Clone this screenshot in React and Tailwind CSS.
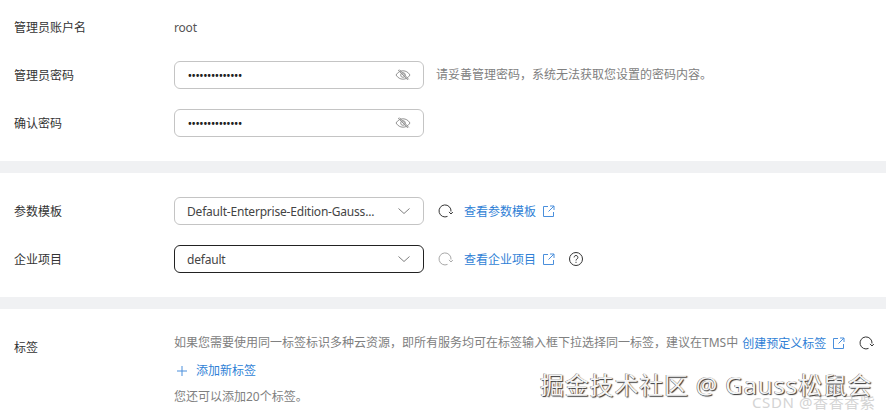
const sans = "font-['Noto_Sans','Noto_Sans_CJK_SC',sans-serif]";

function EyeOff() {
  return (
    <svg width="16" height="16" viewBox="0 0 16 16" fill="none" stroke="#949494" strokeWidth="1">
      <path d="M1 8c1.800-2.800 4.200-4.200 7-4.200s5.200 1.400 7 4.200c-1.800 2.800-4.200 4.200-7 4.200S2.800 10.800 1 8z" />
      <circle cx="8" cy="8" r="2.300" />
      <path d="M3.200 3l9.600 10M4.400 2.600l9.400 9.800" />
    </svg>
  );
}

function Chevron() {
  return (
    <svg width="14" height="14" viewBox="0 0 14 14" fill="none" stroke="#808080" strokeWidth="1">
      <path d="M1.500 4.500L7 9.500l5.500-5" />
    </svg>
  );
}

function Refresh({ color = "#333" }) {
  return (
    <svg width="16" height="16" viewBox="0 0 16 16" fill="none" stroke={color} strokeWidth="1">
      <path d="M10.500 13.400A6 6 0 1 1 14 8.500" />
      <path d="M12 8.900l2 2.100 1.800-2" />
    </svg>
  );
}

function External() {
  return (
    <svg width="13" height="13" viewBox="0 0 13 13" fill="none" stroke="#4a8fdc" strokeWidth="1">
      <path d="M6 1.500H1.500v10h10V7" />
      <path d="M8 1H12v4M12 1L6.500 6.500" />
    </svg>
  );
}

function Help() {
  return (
    <svg width="16" height="16" viewBox="0 0 16 16" fill="none" stroke="#333" strokeWidth="1">
      <circle cx="8" cy="8" r="6.500" />
      <path d="M6.100 6.400a1.900 1.900 0 1 1 2.900 1.600c-.7.400-1 .8-1 1.500" />
      <path d="M8 10.800v1.100" />
    </svg>
  );
}

function Row({ label, children }) {
  return (
    <div className="flex items-center h-7">
      <div className="w-[160px] shrink-0 pt-[2px] text-[12px] text-[#333]">{label}</div>
      {children}
    </div>
  );
}

function PasswordInput() {
  return (
    <div className="w-[250px] h-7 shrink-0 flex items-center justify-between pl-[13px] pr-[12px] bg-white border border-[#c4c4c4] rounded-[6px]">
      <span className="text-[10px] font-semibold text-[#222] tracking-[0.1px]">••••••••••••••</span>
      <EyeOff />
    </div>
  );
}

function SelectBox({ value, active }) {
  return (
    <div className={"w-[250px] h-7 shrink-0 flex items-center justify-between pl-[12px] pr-[12px] bg-white border rounded-[6px] " + (active ? "border-[#222]" : "border-[#c4c4c4]")}>
      <span className="pt-[2px] text-[12px] text-[#444] tracking-[-0.2px]">{value}</span>
      <Chevron />
    </div>
  );
}

function LinkOut({ text }) {
  return (
    <span className="flex items-center gap-[6px] text-[12px] text-[#2f7fd6]">
      <span className="pt-[2px]">{text}</span>
      <External />
    </span>
  );
}

export default function App() {
  return (
    <div className={"relative w-[886px] h-[415px] overflow-hidden bg-white " + sans}>
      <div className="flex flex-col gap-5 pt-[13px] pb-6 pl-[14px]">
        <Row label="管理员账户名">
          <span className="pt-[2px] text-[12px] text-[#555] tracking-[-0.2px]">root</span>
        </Row>
        <Row label="管理员密码">
          <PasswordInput />
          <span className="ml-3 text-[12px] text-[#808080]">请妥善管理密码，系统无法获取您设置的密码内容。</span>
        </Row>
        <Row label="确认密码">
          <PasswordInput />
        </Row>
      </div>
      <div className="h-3 bg-[#f0f1f3]" />
      <div className="flex flex-col gap-5 pt-6 pb-6 pl-[14px]">
        <Row label="参数模板">
          <SelectBox value="Default-Enterprise-Edition-Gauss..." />
          <span className="ml-[13px] mr-[11px] flex"><Refresh /></span>
          <LinkOut text="查看参数模板" />
        </Row>
        <Row label="企业项目">
          <SelectBox value="default" active />
          <span className="ml-[13px] mr-[11px] flex"><Refresh color="#a8a8a8" /></span>
          <LinkOut text="查看企业项目" />
          <span className="ml-[13px] flex"><Help /></span>
        </Row>
      </div>
      <div className="h-3 bg-[#f0f1f3]" />
      <div className="flex pt-6 pl-[14px]">
        <div className="w-[160px] shrink-0 pt-[6px] text-[12px] text-[#333]">标签</div>
        <div className="flex flex-col">
          <div className="flex items-center text-[12px] text-[#808080]">
            <span className="mr-[4px]">如果您需要使用同一标签标识多种云资源，即所有服务均可在标签输入框下拉选择同一标签，建议在TMS中</span>
            <LinkOut text="创建预定义标签" />
            <span className="ml-[13px] flex"><Refresh /></span>
          </div>
          <div className="mt-[9px] flex items-center gap-[8px] text-[12px] text-[#2f7fd6]">
            <svg className="ml-[2px]" width="12" height="12" viewBox="0 0 12 12" fill="none" stroke="#4a8fdc" strokeWidth="1">
              <path d="M6 1v10M1 6h10" />
            </svg>
            添加新标签
          </div>
          <div className="mt-[8px] text-[12px] text-[#808080]">您还可以添加20个标签。</div>
        </div>
      </div>
      <div className="absolute left-[752px] top-[391px] text-[15px] text-[#d4d4d4] tracking-[0.6px]">CSDN @香香香紫</div>
      <div className="absolute left-[540px] top-[367px] text-[24px] text-[#f4f4f4] tracking-[0.8px] [text-shadow:1px_1px_1px_#333,-0.5px_-0.5px_0_#666]">掘金技术社区 @ Gauss松鼠会</div>
    </div>
  );
}
